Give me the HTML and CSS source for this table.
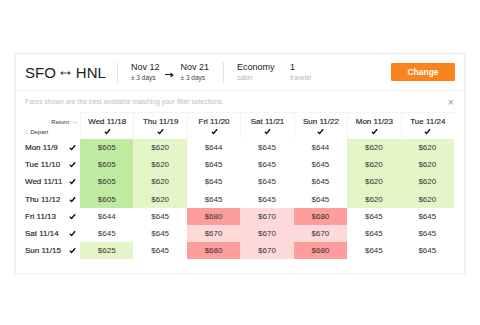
FILE: index.html
```html
<!DOCTYPE html>
<html>
<head>
<meta charset="utf-8">
<link rel="stylesheet" href="styles.css">
</head>
<body>
<div class="page">
  <div class="card">
    <div class="summary">
      <div class="route"><span>SFO</span><svg class="rarrow" width="11" height="6" viewBox="0 0 11 6"><path d="M2 3 H9" stroke="#444" stroke-width="0.9"/><path d="M0 3 L2.8 1 L2.8 5 Z M11 3 L8.2 1 L8.2 5 Z" fill="#444"/></svg><span>HNL</span></div>
      <div class="block dates">
        <div class="pair"><div class="main">Nov 12</div><div class="sub">± 3 days</div></div>
        <svg class="darrow" width="9" height="6" viewBox="0 0 9 6"><path d="M0 2.5 H7" stroke="#222" stroke-width="1"/><path d="M5.5 0.5 L9 3 L5.5 5.5 Z" fill="#222"/></svg>
        <div class="pair"><div class="main">Nov 21</div><div class="sub">± 3 days</div></div>
      </div>
      <div class="block cabin">
        <div class="pair w53"><div class="main">Economy</div><div class="sub light">cabin</div></div>
        <div class="pair"><div class="main">1</div><div class="sub light">traveler</div></div>
      </div>
      <button class="change">Change</button>
    </div>
    <div class="info">
      <span>Fares shown are the best available matching your filter selections.</span>
      <span class="close">×</span>
    </div>
    <div class="grid">
      <div class="corner">
        <div class="ret">Return <span class="oarrow">→</span></div>
        <div class="dep"><span class="oarrow">↓</span> Depart</div>
      </div>
      <div class="colh"><div>Wed 11/18</div><svg class="chk" viewBox="0 0 8 7"><path d="M1 3.8 L3 5.8 L7 1"/></svg></div>
      <div class="colh"><div>Thu 11/19</div><svg class="chk" viewBox="0 0 8 7"><path d="M1 3.8 L3 5.8 L7 1"/></svg></div>
      <div class="colh"><div>Fri 11/20</div><svg class="chk" viewBox="0 0 8 7"><path d="M1 3.8 L3 5.8 L7 1"/></svg></div>
      <div class="colh"><div>Sat 11/21</div><svg class="chk" viewBox="0 0 8 7"><path d="M1 3.8 L3 5.8 L7 1"/></svg></div>
      <div class="colh"><div>Sun 11/22</div><svg class="chk" viewBox="0 0 8 7"><path d="M1 3.8 L3 5.8 L7 1"/></svg></div>
      <div class="colh"><div>Mon 11/23</div><svg class="chk" viewBox="0 0 8 7"><path d="M1 3.8 L3 5.8 L7 1"/></svg></div>
      <div class="colh"><div>Tue 11/24</div><svg class="chk" viewBox="0 0 8 7"><path d="M1 3.8 L3 5.8 L7 1"/></svg></div>

      <div class="rowh"><span>Mon 11/9</span><svg class="chk" viewBox="0 0 8 7"><path d="M1 3.8 L3 5.8 L7 1"/></svg></div>
      <div class="c dg">$605</div><div class="c lg">$620</div><div class="c">$644</div><div class="c">$645</div><div class="c">$644</div><div class="c lg">$620</div><div class="c lg">$620</div>

      <div class="rowh"><span>Tue 11/10</span><svg class="chk" viewBox="0 0 8 7"><path d="M1 3.8 L3 5.8 L7 1"/></svg></div>
      <div class="c dg">$605</div><div class="c lg">$620</div><div class="c">$645</div><div class="c">$645</div><div class="c">$645</div><div class="c lg">$620</div><div class="c lg">$620</div>

      <div class="rowh"><span>Wed 11/11</span><svg class="chk" viewBox="0 0 8 7"><path d="M1 3.8 L3 5.8 L7 1"/></svg></div>
      <div class="c dg">$605</div><div class="c lg">$620</div><div class="c">$645</div><div class="c">$645</div><div class="c">$645</div><div class="c lg">$620</div><div class="c lg">$620</div>

      <div class="rowh"><span>Thu 11/12</span><svg class="chk" viewBox="0 0 8 7"><path d="M1 3.8 L3 5.8 L7 1"/></svg></div>
      <div class="c dg">$605</div><div class="c lg">$620</div><div class="c">$645</div><div class="c">$645</div><div class="c">$645</div><div class="c lg">$620</div><div class="c lg">$620</div>

      <div class="rowh"><span>Fri 11/13</span><svg class="chk" viewBox="0 0 8 7"><path d="M1 3.8 L3 5.8 L7 1"/></svg></div>
      <div class="c">$644</div><div class="c">$645</div><div class="c rd">$680</div><div class="c pk">$670</div><div class="c rd">$680</div><div class="c">$645</div><div class="c">$645</div>

      <div class="rowh"><span>Sat 11/14</span><svg class="chk" viewBox="0 0 8 7"><path d="M1 3.8 L3 5.8 L7 1"/></svg></div>
      <div class="c">$645</div><div class="c">$645</div><div class="c pk">$670</div><div class="c pk">$670</div><div class="c pk">$670</div><div class="c">$645</div><div class="c">$645</div>

      <div class="rowh"><span>Sun 11/15</span><svg class="chk" viewBox="0 0 8 7"><path d="M1 3.8 L3 5.8 L7 1"/></svg></div>
      <div class="c lg">$625</div><div class="c">$645</div><div class="c rd">$680</div><div class="c pk">$670</div><div class="c rd">$680</div><div class="c">$645</div><div class="c">$645</div>
    </div>
  </div>
</div>
</body>
</html>
```
FILE: styles.css
```css
* { box-sizing: border-box; }
html, body { margin: 0; padding: 0; background: #fff; }
body { font-family: "Liberation Sans", Arial, sans-serif; color: #222; }
.page { padding: 53px 15px 0 15px; }
.card {
  width: 450px;
  border: 1px solid #ececec;
  box-shadow: 0 1px 3px rgba(0,0,0,0.06);
  background: #fff;
  padding: 0 9px 14px 9px;
}
.summary {
  height: 37px;
  display: flex;
  align-items: center;
  border-bottom: 1px solid #eeeeee;
  margin: 0 -9px;
  padding: 0 9px;
}
.route { width: 92px; font-size: 15px; display: flex; align-items: center; }
.rarrow { margin: 1px 5px 0 4px; }
.block {
  display: flex;
  align-items: center;
  border-left: 1px solid #e6e6e6;
  height: 21px;
  padding-left: 13px;
}
.dates { width: 106px; }
.pair { display: flex; flex-direction: column; }
.w53 { width: 53px; }
.main { font-size: 9px; line-height: 11px; }
.sub { font-size: 6.5px; line-height: 9px; color: #444; }
.sub.light { color: #b5b5b5; }
.darrow { margin: 5px 7px 0 5px; }
.change {
  margin-left: auto;
  width: 64px;
  height: 18px;
  border: 0;
  border-radius: 1px;
  background: #f9831d;
  color: #fff;
  font-family: "Liberation Sans", Arial, sans-serif;
  font-weight: bold;
  font-size: 8.5px;
  padding: 0;
}
.info {
  height: 21px;
  display: flex;
  align-items: center;
  justify-content: space-between;
  font-size: 6.8px;
  color: #c0c0c0;
}
.close { font-size: 11px; color: #999; margin-right: 1px; }
.grid {
  display: grid;
  grid-template-columns: 55px repeat(7, 1fr);
  grid-template-rows: 27px repeat(7, 17.2px);
  width: 429px;
}
.corner {
  display: flex;
  flex-direction: column;
  justify-content: center;
  font-size: 6px;
  color: #333;
  padding-top: 2px;
}
.ret { align-self: flex-end; margin-right: 2px; }
.dep { margin-top: 3px; }
.oarrow { color: #f5902c; font-size: 7px; }
.colh {
  display: flex;
  flex-direction: column;
  align-items: center;
  justify-content: center;
  font-size: 8px;
  color: #1e1e1e;
  -webkit-text-stroke: 0.15px #1e1e1e;
  border-left: 1px solid #f3f3f3;
  border-top: 1px solid #f5f5f5;
  gap: 2px;
}
.chk { width: 7px; height: 7px; fill: none; stroke: #111; stroke-width: 1.6; }
.rowh {
  display: flex;
  align-items: center;
  justify-content: space-between;
  font-size: 8px;
  color: #222;
  padding-right: 4px;
}
.rowh span { -webkit-text-stroke: 0.15px #222; }
.c {
  display: flex;
  align-items: center;
  justify-content: center;
  font-size: 8px;
  color: #333;
}
.dg { background: #bfea9f; }
.lg { background: #e4f6c8; }
.rd { background: #fd9d9c; }
.pk { background: #fdd9d9; }
```
